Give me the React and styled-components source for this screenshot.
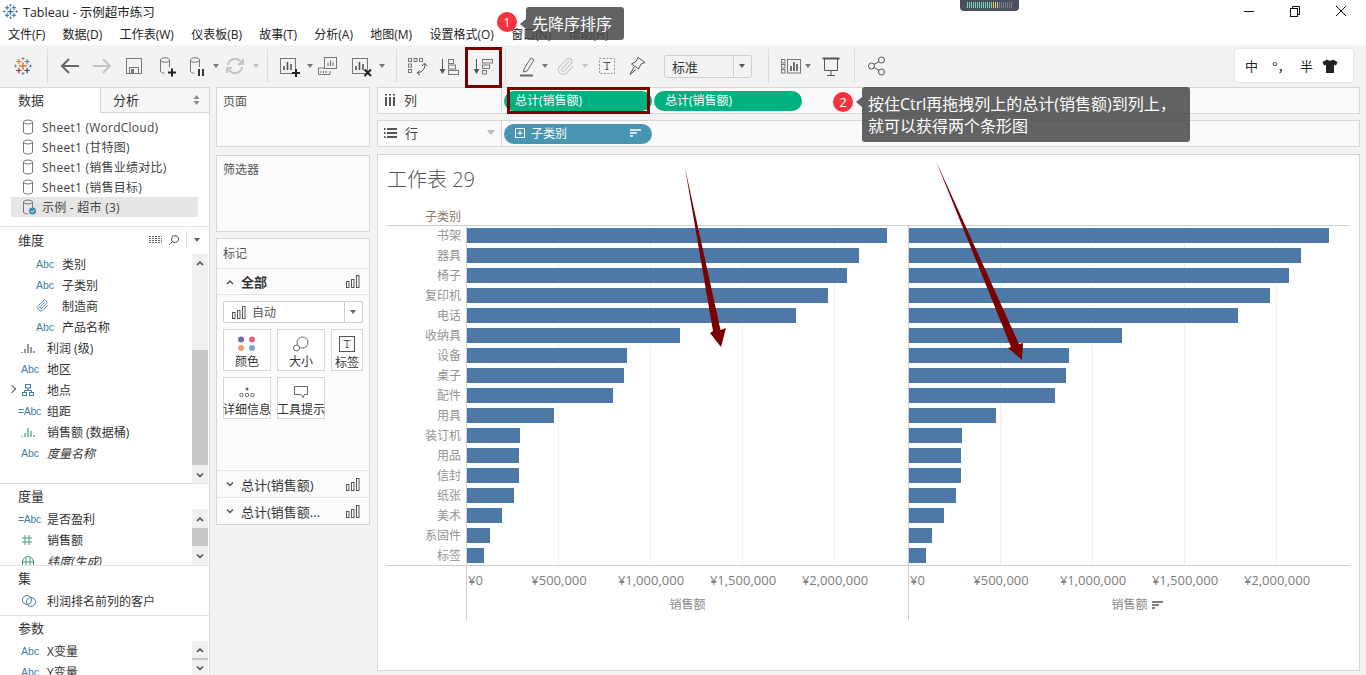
import styled, { createGlobalStyle } from 'styled-components';
import { Paperclip } from 'lucide-react';

const GlobalStyle = createGlobalStyle`
	html, body {
		margin: 0;
		padding: 0;
		overflow: hidden;
		background: #fff;
	}
	* {
		box-sizing: border-box;
	}
	body {
		font-family: "Open Sans", "Noto Sans CJK SC", sans-serif;
		font-size: 12px;
		color: #333;
	}
`;

const Page = styled.div`
	position: relative;
	width: 1366px;
	height: 675px;
	overflow: hidden;
	display: flex;
	flex-direction: column;
	background: #f3f3f3;
`;

const TitleBar = styled.div`
	height: 23px;
	background: #fff;
	display: flex;
	align-items: center;
	padding-left: 3px;
	padding-bottom: 1px;
	gap: 5px;
	font-size: 12.5px;
	color: #222;
`;

const WindowControls = styled.div`
	margin-left: auto;
	display: flex;
	align-items: center;
	padding-right: 19px;
	gap: 34px;
`;

const MenuBar = styled.div`
	height: 22px;
	background: #fff;
	display: flex;
	align-items: center;
	padding-left: 8px;
	gap: 17.3px;
	color: #222;
`;

const Toolbar = styled.div`
	height: 42px;
	display: flex;
	align-items: center;
	padding-left: 11px;
`;

const ToolSep = styled.div`
	width: 1px;
	height: 34px;
	background: #dcdcdc;
	margin-left: ${(p) => p.$ml}px;
`;

const Tool = styled.div`
	width: 24px;
	height: 24px;
	flex: none;
	margin-left: ${(p) => p.$ml || 0}px;
	display: flex;
	align-items: center;
	justify-content: center;
`;

const Caret = styled.div`
	width: 0;
	height: 0;
	flex: none;
	margin-left: ${(p) => p.$ml + 1}px;
	margin-right: 1px;
	border-left: 3px solid transparent;
	border-right: 3px solid transparent;
	border-top: 4px solid ${(p) => p.$color || '#777'};
`;

const ViewSelect = styled.div`
	width: 88px;
	height: 23px;
	margin-left: ${(p) => p.$ml}px;
	border: 1px solid #cfcfcf;
	border-radius: 2px;
	display: flex;
	align-items: center;
	padding-left: 7px;
	font-size: 13px;
`;

const SelectArrow = styled.div`
	margin-left: auto;
	width: 18px;
	height: 100%;
	border-left: 1px solid #cfcfcf;
	display: flex;
	align-items: center;
	justify-content: center;
`;

const Main = styled.div`
	flex: 1;
	display: flex;
	min-height: 0;
`;

const DataPanel = styled.div`
	width: 210px;
	flex: none;
	background: #fff;
	border-right: 1px solid #d6d6d6;
	border-top: 1px solid #d6d6d6;
	display: flex;
	flex-direction: column;
`;

const Tabs = styled.div`
	height: 25px;
	display: flex;
`;

const Tab = styled.div`
	width: ${(p) => (p.$active ? '100px' : '109px')};
	padding-left: ${(p) => (p.$active ? '18px' : '12px')};
	font-size: 13px;
	line-height: 25px;
	display: flex;
	justify-content: space-between;
	background: ${(p) => (p.$active ? '#fff' : '#f6f6f6')};
	${(p) => !p.$active && 'border-left: 1px solid #d6d6d6; border-bottom: 1px solid #d6d6d6;'}
`;

const SortArrows = styled.div`
	width: 26px;
	display: flex;
	align-items: center;
	justify-content: center;
`;

const SourceList = styled.div`
	height: 114px;
	padding-top: 4px;
	border-bottom: 1px solid #e2e2e2;
`;

const SourceRow = styled.div`
	height: 20px;
	margin-left: 11px;
	width: 187px;
	padding-left: 11px;
	display: flex;
	align-items: center;
	gap: 6px;
	letter-spacing: 0.25px;
	white-space: nowrap;
	color: #444;
	background: ${(p) => (p.$selected ? '#e6e6e6' : 'transparent')};
`;

const FieldSection = styled.div`
	height: ${(p) => p.$h}px;
	flex: none;
	display: flex;
	flex-direction: column;
	overflow: hidden;
	border-bottom: ${(p) => (p.$last ? 'none' : '1px solid #e2e2e2')};
`;

const SectionHead = styled.div`
	height: ${(p) => p.$h}px;
	flex: none;
	display: flex;
	align-items: center;
	padding-left: 18px;
	padding-bottom: 2px;
	font-size: 13px;
	color: #333;
`;

const HeadTools = styled.div`
	margin-left: auto;
	display: flex;
	align-items: center;
	padding-right: 8px;
	gap: 6px;
`;

const HeadDivider = styled.div`
	width: 1px;
	height: 18px;
	background: #ddd;
`;

const FieldBody = styled.div`
	flex: 1;
	min-height: 0;
	display: flex;
`;

const FieldList = styled.div`
	flex: 1;
	overflow: hidden;
	margin-top: -1px;
`;

const FieldRow = styled.div`
	position: relative;
	height: 21px;
	display: flex;
	align-items: center;
	padding-left: ${(p) => (p.$indent ? 36 : 21)}px;
	font-size: 12px;
	font-style: ${(p) => (p.$italic ? 'italic' : 'normal')};
	color: #333;
	white-space: nowrap;
`;

const FieldIcon = styled.div`
	width: ${(p) => (p.$wide ? 29 : 26)}px;
	flex: none;
	font-family: "Liberation Sans", sans-serif;
	font-size: 10.5px;
	font-style: normal;
	color: ${(p) => p.$color || '#3f7f9f'};
	white-space: nowrap;
	display: flex;
	align-items: center;
	margin-left: ${(p) => (p.$wide ? '-3px' : 0)};
	letter-spacing: ${(p) => (p.$wide ? '-0.3px' : 0)};
`;

const Expander = styled.div`
	position: absolute;
	left: 9px;
	top: 7px;
	width: 6px;
	height: 6px;
	border-top: 1px solid #555;
	border-right: 1px solid #555;
	transform: rotate(45deg);
`;

const ScrollTrack = styled.div`
	width: 16px;
	flex: none;
	margin-right: 1px;
	background: #f0f0f0;
	display: flex;
	flex-direction: column;
`;

const ScrollArrow = styled.div`
	height: ${(p) => p.$h}px;
	flex: none;
	display: flex;
	align-items: center;
	justify-content: center;
`;

const ScrollGap = styled.div`
	flex: ${(p) => (p.$h ? 'none' : 1)};
	height: ${(p) => p.$h || 0}px;
`;

const ScrollThumb = styled.div`
	height: ${(p) => p.$h}px;
	flex: none;
	background: #c8c8c8;
`;

const CardColumn = styled.div`
	width: 154px;
	flex: none;
	margin-left: 6px;
	display: flex;
	flex-direction: column;
`;

const Card = styled.div`
	height: ${(p) => p.$h}px;
	margin-top: ${(p) => p.$mt || 0}px;
	background: #fbfbfb;
	border: 1px solid #d6d6d6;
	display: flex;
	flex-direction: column;
`;

const CardTitle = styled.div`
	height: 29px;
	flex: none;
	padding-left: 6px;
	line-height: ${(p) => p.$lh || 27}px;
	color: #555;
`;

const MarkRow = styled.div`
	height: ${(p) => p.$h}px;
	flex: none;
	border-top: 1px solid #e4e4e4;
	display: flex;
	align-items: center;
	padding: 0 9px 0 8px;
	gap: 6px;
	font-size: 13px;
	font-weight: ${(p) => (p.$bold ? 700 : 400)};
	white-space: nowrap;
	color: #333;
`;

const RowEnd = styled.div`
	margin-left: auto;
	display: flex;
`;

const MarkBody = styled.div`
	flex: 1;
	border-top: 1px solid #e4e4e4;
	padding: 6px 6px 0;
`;

const MarkType = styled.div`
	height: 22px;
	border: 1px solid #d0d0d0;
	border-radius: 2px;
	background: #fff;
	display: flex;
	align-items: center;
	padding-left: 8px;
	gap: 6px;
	color: #555;
`;

const MarkGrid = styled.div`
	margin-top: 6px;
	display: flex;
	flex-wrap: wrap;
	gap: 6px;
`;

const MarkButton = styled.div`
	width: ${(p) => p.$w}px;
	height: 42px;
	background: #fff;
	border: 1px solid #d8d8d8;
	display: flex;
	flex-direction: column;
	align-items: center;
	padding-top: 3px;
	font-size: 12px;
	line-height: 16px;
	white-space: nowrap;
	color: #333;
`;

const ButtonIcon = styled.div`
	height: 22px;
	display: flex;
	align-items: center;
	justify-content: center;
`;

const RightColumn = styled.div`
	width: 983px;
	flex: none;
	margin-left: 7px;
	display: flex;
	flex-direction: column;
`;

const Shelf = styled.div`
	height: ${(p) => p.$h}px;
	margin-top: ${(p) => p.$mt || 0}px;
	background: #fafafa;
	border: 1px solid #d6d6d6;
	display: flex;
	align-items: center;
`;

const ShelfLabel = styled.div`
	width: 124px;
	height: 100%;
	flex: none;
	border-right: 1px solid #d6d6d6;
	display: flex;
	align-items: center;
	padding-left: 6px;
	padding-bottom: 2px;
	gap: 8px;
	font-size: 13px;
	color: #444;
`;

const ShelfCaret = styled.div`
	margin-left: auto;
	margin-right: 6px;
	width: 0;
	height: 0;
	border-left: 4px solid transparent;
	border-right: 4px solid transparent;
	border-top: 5px solid #bbb;
`;

const PillRow = styled.div`
	display: flex;
	padding-left: 2px;
	gap: 2px;
`;

const Pill = styled.div`
	width: 148px;
	height: 20px;
	border-radius: 10px;
	background: ${(p) => p.$color};
	color: #fff;
	display: flex;
	align-items: center;
	padding-left: 11px;
	padding-bottom: 2px;
	gap: 6px;
	font-size: 12px;
`;

const PillEnd = styled.div`
	margin-left: auto;
	margin-right: 11px;
	display: flex;
`;

const Viz = styled.div`
	height: 517px;
	margin-top: 7px;
	background: #fff;
	border: 1px solid #d6d6d6;
	padding-left: 8px;
`;

const VizTitle = styled.div`
	height: 50px;
	padding-left: 1px;
	font-size: 20px;
	font-weight: 300;
	line-height: 50px;
	color: #555;
`;

const Chart = styled.div`
	display: grid;
	grid-template-columns: 80px 442px 442px;
	grid-template-rows: 21px 340px 54px;
	color: #8a8a8a;
`;

const HeaderCell = styled.div`
	grid-column: 1 / 4;
	border-bottom: 1px solid #cfcfcf;
	color: #8a7a68;
`;

const HeaderText = styled.div`
	width: 80px;
	height: 20px;
	padding-right: 5px;
	text-align: right;
	line-height: 23px;
`;

const Labels = styled.div`
	border-bottom: 1px solid #cfcfcf;
`;

const Label = styled.div`
	height: 20px;
	padding-right: 5px;
	text-align: right;
	line-height: 20px;
	color: #939393;
`;

const Pane = styled.div`
	border-left: 1px solid #cfcfcf;
	border-bottom: 1px solid #cfcfcf;
	overflow: hidden;
	background: repeating-linear-gradient(90deg, transparent 0 91px, #f0f0f0 91px 92px);
`;

const BarRow = styled.div`
	height: 20px;
	padding-top: 2px;
`;

const Bar = styled.div`
	height: 15px;
	background: #4e79a7;
`;

const Axis = styled.div`
	border-left: 1px solid #cfcfcf;
`;

const Ticks = styled.div`
	display: flex;
	height: 27px;
	align-items: center;
	font-size: 13px;
	color: #7d7d7d;
	white-space: nowrap;
`;

const Tick = styled.div`
	flex: none;
	width: ${(p) => (p.$first ? '46px' : '92px')};
	padding-left: ${(p) => (p.$first ? '1px' : 0)};
	text-align: ${(p) => (p.$first ? 'left' : 'center')};
`;

const AxisTitle = styled.div`
	display: flex;
	justify-content: center;
	line-height: 20px;
	padding-top: 2px;
	color: #8a8a8a;
`;

const AxisTitleText = styled.span`
	position: relative;
`;

const AxisSort = styled.span`
	position: absolute;
	left: 41px;
	top: 6px;
	display: flex;
`;

const TopGadget = styled.div`
	position: absolute;
	left: 960px;
	top: 0;
	width: 59px;
	height: 11px;
	background: #4a4e5d;
	border-radius: 0 0 4px 4px;
	display: flex;
	align-items: center;
	justify-content: center;
`;

const GadgetMeter = styled.div`
	width: 46px;
	height: 6px;
	margin-top: -2px;
	background: repeating-linear-gradient(90deg, transparent 0 1px, #4a4e5d 1px 2px),
		linear-gradient(90deg, #6fd6b8 0 55%, #e8cf6a 55% 68%, #7b7f8c 68% 100%);
`;

const ImeWidget = styled.div`
	position: absolute;
	left: 1235px;
	top: 49px;
	width: 118px;
	height: 33px;
	background: #fff;
	border-radius: 3px;
	box-shadow: 0 0 3px rgba(0, 0, 0, 0.12);
	display: flex;
	align-items: center;
	padding-left: 10px;
	font-size: 13px;
	color: #222;
`;

const ImeItem = styled.span`
	width: ${(p) => p.$w}px;
	flex: none;
	display: flex;
`;

const Note = styled.div`
	position: absolute;
	left: ${(p) => p.$x}px;
	top: ${(p) => p.$y}px;
	width: ${(p) => p.$w}px;
	height: ${(p) => p.$h}px;
	background: rgba(70, 70, 70, 0.85);
	border-radius: 3px;
	color: #fff;
	font-size: 16px;
	line-height: 22px;
	padding: ${(p) => p.$pad};
	white-space: nowrap;

	&::before {
		content: '';
		position: absolute;
		left: -6px;
		top: ${(p) => p.$notch}px;
		border-top: 5px solid transparent;
		border-bottom: 5px solid transparent;
		border-right: 6px solid rgba(70, 70, 70, 0.85);
	}
`;

const Badge = styled.div`
	position: absolute;
	left: ${(p) => p.$x - 10}px;
	top: ${(p) => p.$y - 10}px;
	width: 20px;
	height: 20px;
	border-radius: 50%;
	background: #f5333f;
	color: #fff;
	font-size: 13px;
	line-height: 20px;
	text-align: center;
`;

const RedBox = styled.div`
	position: absolute;
	left: ${(p) => p.$x}px;
	top: ${(p) => p.$y}px;
	width: ${(p) => p.$w}px;
	height: ${(p) => p.$h}px;
	border: 3px solid #7b0000;
`;

const ArrowLayer = styled.svg`
	position: absolute;
	left: 0;
	top: 0;
	pointer-events: none;
`;

const Line = ({ children, size = 24, stroke = '#777', width = 1 }) => (
	<svg width={size} height={size} viewBox={`0 0 ${size} ${size}`} fill="none" stroke={stroke} strokeWidth={width}>
		{children}
	</svg>
);

const TableauLogo = ({ size = 24, colors = ['#e8762d', '#5b879b', '#c72037', '#1f447e', '#5b879b'] }) => {
	const cross = (x, y, r, c, w) => (
		<g key={`${x}-${y}`} stroke={c} strokeWidth={w}>
			<path d={`M${x - r} ${y}H${x + r}M${x} ${y - r}V${y + r}`} />
		</g>
	);
	return (
		<svg width={size} height={size} viewBox="0 0 24 24" fill="none">
			{cross(12, 12, 5, colors[0], 2)}
			{cross(6.5, 6, 3.5, colors[0], 1.6)}
			{cross(17.5, 6, 3.5, colors[1], 1.6)}
			{cross(6.5, 18, 3.5, colors[2], 1.6)}
			{cross(17.5, 18, 3.5, colors[3], 1.6)}
			{cross(2, 12, 2, colors[4], 1.2)}
			{cross(22, 12, 2, colors[4], 1.2)}
			{cross(12, 2, 2, colors[4], 1.2)}
			{cross(12, 22, 2, colors[4], 1.2)}
		</svg>
	);
};

const BackIcon = ({ color = '#666', flip }) => (
	<Line stroke={color} width={2}>
		<path d={flip ? 'M3 12H20M13 5l7 7-7 7' : 'M21 12H4M11 5l-7 7 7 7'} />
	</Line>
);

const SaveIcon = () => (
	<Line>
		<rect x="4.5" y="4.5" width="15" height="15" />
		<rect x="7.5" y="13.5" width="9" height="6" />
		<rect x="9" y="15" width="3" height="4" fill="#777" stroke="none" />
	</Line>
);

const DbShape = () => (
	<>
		<path d="M6.5 6V17c0 1.5 2 2.2 4 2.2M15.5 6v7" />
		<ellipse cx="11" cy="6" rx="4.5" ry="2.2" />
	</>
);

const DbAddIcon = () => (
	<Line>
		<DbShape />
		<path d="M18 14.5v8M14 18.5h8" stroke="#222" strokeWidth="2" />
	</Line>
);

const DbPauseIcon = () => (
	<Line>
		<DbShape />
		<path d="M15 15v7M19 15v7" stroke="#333" strokeWidth="2" />
	</Line>
);

const RefreshIcon = () => (
	<Line stroke="#c4c4c4" width={2}>
		<path d="M5 11a7 7 0 0 1 12-4l2 2M19 13a7 7 0 0 1-12 4l-2-2" />
		<path d="M20 5v5h-5M4 19v-5h5" />
	</Line>
);

const NewSheetIcon = () => (
	<Line>
		<rect x="2.5" y="4.5" width="15" height="15" />
		<path d="M6 16v-4M9.5 16V8M13 16v-6" stroke="#555" strokeWidth="1.6" />
		<path d="M18 15v8M14 19h8" stroke="#222" strokeWidth="2" />
	</Line>
);

const DuplicateIcon = () => (
	<Line>
		<path d="M9 14H3.5v6.5H15V17" />
		<rect x="9.5" y="3.5" width="12" height="11" />
		<path d="M13 12V9M15.5 12V6.5M18 12V8M6 19v-2M8.5 19v-2M11 19v-2" stroke="#666" />
	</Line>
);

const ClearIcon = () => (
	<Line>
		<rect x="2.5" y="4.5" width="15" height="15" />
		<path d="M6 16v-4M9.5 16V8M13 16v-6" stroke="#555" strokeWidth="1.6" />
		<path d="M14.5 15.5l6.5 6.5M21 15.5L14.5 22" stroke="#222" strokeWidth="2" />
	</Line>
);

const SwapIcon = () => (
	<Line>
		<rect x="3.5" y="4.5" width="3" height="3" />
		<rect x="9" y="4.5" width="3" height="3" />
		<rect x="14.5" y="4.5" width="3" height="3" />
		<rect x="3.5" y="10" width="3" height="3" />
		<rect x="3.5" y="15.5" width="3" height="3" />
		<path d="M19.5 10c1 4-2 8.5-7 9" stroke="#555" />
		<path d="M17 12l2.5-3 2.5 3M15 16.5L12 19l3 2" stroke="#555" />
	</Line>
);

const SortAscIcon = () => (
	<Line>
		<path d="M5.5 5v14" stroke="#555" />
		<path d="M2.5 15h6l-3 5z" fill="#555" stroke="none" />
		<rect x="11.5" y="5.5" width="5" height="4" />
		<rect x="11.5" y="11" width="7" height="4" />
		<rect x="11.5" y="16.5" width="10" height="4" />
	</Line>
);

const SortDescIcon = () => (
	<Line>
		<path d="M6.5 5v14" stroke="#555" />
		<path d="M3.5 15h6l-3 5z" fill="#555" stroke="none" />
		<rect x="12.5" y="5.5" width="10" height="3.5" />
		<rect x="12.5" y="11" width="7" height="3.5" />
		<rect x="12.5" y="16.5" width="4" height="3.5" />
	</Line>
);

const HighlightIcon = () => (
	<Line>
		<path d="M9 15l7-11 3 2-7 11-3.5 1z" stroke="#666" />
		<path d="M5 21.5h13" stroke="#666" strokeWidth="2" />
	</Line>
);

const TextBoxIcon = ({ dashed = true }) => (
	<Line>
		<rect x="4.5" y="4.5" width="15" height="15" strokeDasharray={dashed ? '2 1.5' : undefined} stroke={dashed ? '#999' : '#555'} />
		<path d="M8.5 8.5h7M12 8.5v7M10.5 15.5h3" stroke="#555" />
	</Line>
);

const PinIcon = () => (
	<Line stroke="#555">
		<path d="M13 3.5l7 5-4 1.5-2.5 5-7-5 4.5-2.5zM9 13l-4 7.5 6-5" />
	</Line>
);

const ShowMeIcon = () => (
	<Line>
		<rect x="2.5" y="5.5" width="3.5" height="3.5" />
		<rect x="2.5" y="10.5" width="3.5" height="3.5" />
		<rect x="2.5" y="15.5" width="3.5" height="3.5" />
		<rect x="8.5" y="5.5" width="13" height="13.5" />
		<path d="M12 17v-5M15 17V8M18 17v-7" stroke="#555" strokeWidth="1.6" />
	</Line>
);

const PresentIcon = () => (
	<Line stroke="#555">
		<path d="M5.5 5v11.5h13V5M12 16.5V21M8 21.5h8" />
		<path d="M3.5 4.5h17" strokeWidth="2" />
	</Line>
);

const ShareIcon = () => (
	<Line stroke="#555">
		<circle cx="6.5" cy="12" r="3" />
		<circle cx="16.5" cy="6" r="3" />
		<circle cx="16.5" cy="18" r="3" />
		<path d="M9 10.5l5-3M9 13.5l5 3" />
	</Line>
);

const DbSmallIcon = ({ checked }) => (
	<svg width="14" height="16" viewBox="0 0 14 16" fill="none" stroke="#777">
		<path d="M1.5 3v10c0 1.2 2 2 4.5 2" />
		<path d="M10.5 3v6" />
		{!checked && <path d="M10.5 9v4c0 1.2-2 2-4.5 2" />}
		<ellipse cx="6" cy="3" rx="4.5" ry="2" />
		{checked && (
			<>
				<circle cx="10.5" cy="12" r="3.5" fill="#3a87ad" stroke="none" />
				<path d="M8.8 12l1.3 1.3 2.2-2.3" stroke="#fff" />
			</>
		)}
	</svg>
);

const SmallBars = ({ color = '#555' }) => (
	<svg width="16" height="12" viewBox="0 0 16 12" fill="none" stroke={color} strokeWidth="1.2">
		<path d="M1 11v-1M4 11V7M7 11V2M10 11V5M13 11V9" />
	</svg>
);

const HierarchyIcon = () => (
	<svg width="14" height="14" viewBox="0 0 14 14" fill="none" stroke="#3f7f9f">
		<rect x="4.5" y="1.5" width="5" height="3.5" />
		<rect x="1.5" y="9.5" width="4" height="3" />
		<rect x="8.5" y="9.5" width="4" height="3" />
		<path d="M7 5v2.5M3.5 9.5v-2h7v2" />
	</svg>
);

const HashIcon = () => (
	<svg width="12" height="12" viewBox="0 0 12 12" fill="none" stroke="#3f9a7e">
		<path d="M4 1v10M8 1v10M1 4h10M1 8h10" />
	</svg>
);

const GlobeIcon = () => (
	<svg width="14" height="12" viewBox="0 0 14 12" fill="none" stroke="#3f9a7e">
		<path d="M1.5 11.5V7a5.5 5.5 0 0 1 11 0v4.5zM1.5 7h11M5 2.5v9M9 2.5v9" />
	</svg>
);

const VennIcon = () => (
	<svg width="16" height="14" viewBox="0 0 16 14" fill="none" stroke="#3f7f9f">
		<circle cx="6" cy="6" r="4.5" />
		<circle cx="10" cy="8" r="4.5" />
	</svg>
);

const SearchSmall = () => (
	<svg width="12" height="12" viewBox="0 0 12 12" fill="none" stroke="#555">
		<circle cx="7" cy="5" r="3.5" />
		<path d="M4.5 7.5L1.5 10.5" />
	</svg>
);

const GridSmall = () => (
	<svg width="13" height="10" viewBox="0 0 13 10" stroke="#666" strokeDasharray="2 1">
		<path d="M0 1.5h13M0 3.5h13M0 5.5h13M0 7.5h13" />
	</svg>
);

const UpDown = () => (
	<svg width="7" height="12" viewBox="0 0 7 12" fill="#888">
		<path d="M3.5 1L6.5 5h-6zM3.5 11L.5 7h6z" />
	</svg>
);

const Chevron = ({ up, color = '#444', size = 10 }) => (
	<svg width={size} height={size} viewBox="0 0 10 10" fill="none" stroke={color} strokeWidth="1.5">
		<path d={up ? 'M2 7l3-3 3 3' : 'M2 3.5l3 3 3-3'} />
	</svg>
);

const MarkBarsIcon = () => (
	<svg width="14" height="13" viewBox="0 0 14 13" fill="none" stroke="#555">
		<rect x="0.5" y="6.5" width="2.5" height="6" />
		<rect x="5.5" y="4.5" width="2.5" height="8" />
		<rect x="10.5" y="0.5" width="2.5" height="12" />
	</svg>
);

const ColorDots = () => (
	<svg width="20" height="16" viewBox="0 0 20 16">
		<circle cx="4" cy="3.5" r="3" fill="#7d6a9b" />
		<circle cx="15" cy="3.5" r="3" fill="#e8607a" />
		<circle cx="4" cy="12" r="3" fill="#eea070" />
		<circle cx="15" cy="12" r="3" fill="#7da6cf" />
	</svg>
);

const SizeIcon = () => (
	<svg width="16" height="16" viewBox="0 0 16 16" fill="none" stroke="#666">
		<circle cx="9.5" cy="6.5" r="5.5" />
		<circle cx="3.5" cy="12" r="3" fill="#fff" />
	</svg>
);

const DetailIcon = () => (
	<svg width="16" height="12" viewBox="0 0 16 12" fill="none" stroke="#666">
		<circle cx="8" cy="3" r="1.5" fill="#666" stroke="none" />
		<circle cx="2.5" cy="9" r="1.7" />
		<circle cx="8" cy="9" r="1.7" />
		<circle cx="13.5" cy="9" r="1.7" />
	</svg>
);

const TooltipIcon = () => (
	<svg width="16" height="14" viewBox="0 0 16 14" fill="none" stroke="#666">
		<path d="M1.5 1.5h13v8h-3l-1.5 3-2-3H1.5z" />
	</svg>
);

const ColumnsIcon = () => (
	<svg width="12" height="12" viewBox="0 0 12 12" stroke="#555" strokeWidth="2">
		<path d="M2 3v9M6 3v9M10 3v9" />
		<path d="M2 0v1.5M6 0v1.5M10 0v1.5" />
	</svg>
);

const RowsIcon = () => (
	<svg width="13" height="12" viewBox="0 0 13 12" stroke="#555" strokeWidth="2">
		<path d="M3 2h10M3 6h10M3 10h10M0 2h1.5M0 6h1.5M0 10h1.5" />
	</svg>
);

const PlusBox = () => (
	<svg width="10" height="10" viewBox="0 0 10 10" fill="none" stroke="#fff">
		<rect x="0.5" y="0.5" width="9" height="9" />
		<path d="M5 2.5v5M2.5 5h5" />
	</svg>
);

const SortBars = ({ color = '#fff' }) => (
	<svg width="11" height="8" viewBox="0 0 11 8" stroke={color} strokeWidth="1.5">
		<path d="M0 1h11M0 4h7M0 7h3" />
	</svg>
);

const ShirtIcon = () => (
	<svg width="16" height="14" viewBox="0 0 16 14" fill="#222">
		<path d="M5 .5L.5 3 2 6.5l2-.8V14h8V5.7l2 .8L15.5 3 11 .5C10 2 6 2 5 .5z" />
	</svg>
);

const bars = [
	['书架', 420],
	['器具', 392],
	['椅子', 380],
	['复印机', 361],
	['电话', 329],
	['收纳具', 213],
	['设备', 160],
	['桌子', 157],
	['配件', 146],
	['用具', 87],
	['装订机', 53],
	['用品', 52],
	['信封', 52],
	['纸张', 47],
	['美术', 35],
	['系固件', 23],
	['标签', 17],
];

const ticks = ['¥500,000', '¥1,000,000', '¥1,500,000', '¥2,000,000'];
const menus = ['文件(F)', '数据(D)', '工作表(W)', '仪表板(B)', '故事(T)', '分析(A)', '地图(M)', '设置格式(O)', '窗口(N)', '帮助(H)'];
const sources = ['Sheet1 (WordCloud)', 'Sheet1 (甘特图)', 'Sheet1 (销售业绩对比)', 'Sheet1 (销售目标)'];

const BarPane = () => (
	<Pane>
		{bars.map(([name, width]) => (
			<BarRow key={name}>
				<Bar style={{ width }} />
			</BarRow>
		))}
	</Pane>
);

const AxisPart = ({ sorted }) => (
	<Axis>
		<Ticks>
			<Tick $first>¥0</Tick>
			{ticks.map((tick) => (
				<Tick key={tick}>{tick}</Tick>
			))}
		</Ticks>
		<AxisTitle>
			<AxisTitleText>
				销售额
				{sorted && (
					<AxisSort>
						<SortBars color="#555" />
					</AxisSort>
				)}
			</AxisTitleText>
		</AxisTitle>
	</Axis>
);

const Scrollbar = ({ top, thumb, upH, downH }) => (
	<ScrollTrack>
		<ScrollArrow $h={upH}>
			<Chevron up />
		</ScrollArrow>
		{top ? <ScrollGap $h={top} /> : null}
		<ScrollThumb $h={thumb} />
		<ScrollGap />
		<ScrollArrow $h={downH}>
			<Chevron />
		</ScrollArrow>
	</ScrollTrack>
);

export default function App() {
	return (
		<Page>
			<GlobalStyle />
			<TitleBar>
				<TableauLogo size={15} colors={['#2f6f9f', '#2f6f9f', '#2f6f9f', '#2f6f9f', '#2f6f9f']} />
				Tableau - 示例超市练习
				<WindowControls>
					<Line size={12} stroke="#111">
						<path d="M1 6.5h10" />
					</Line>
					<Line size={12} stroke="#111">
						<rect x="1.5" y="3.5" width="7" height="8" />
						<path d="M3.5 3.5v-2h7v8h-2" />
					</Line>
					<Line size={12} stroke="#111">
						<path d="M1 1l10 10M11 1L1 11" />
					</Line>
				</WindowControls>
			</TitleBar>
			<MenuBar>
				{menus.map((menu) => (
					<div key={menu}>{menu}</div>
				))}
			</MenuBar>
			<Toolbar>
				<Tool><TableauLogo size={18} /></Tool>
				<ToolSep $ml={12} />
				<Tool $ml={10}><BackIcon /></Tool>
				<Tool $ml={8}><BackIcon color="#c4c4c4" flip /></Tool>
				<Tool $ml={8}><SaveIcon /></Tool>
				<Tool $ml={8}><DbAddIcon /></Tool>
				<Tool $ml={6}><DbPauseIcon /></Tool>
				<Caret $ml={4} />
				<Tool $ml={3}><RefreshIcon /></Tool>
				<Caret $ml={5} $color="#c4c4c4" />
				<ToolSep $ml={7} />
				<Tool $ml={10}><NewSheetIcon /></Tool>
				<Caret $ml={4} />
				<Tool $ml={1}><DuplicateIcon /></Tool>
				<Tool $ml={11}><ClearIcon /></Tool>
				<Caret $ml={4} />
				<ToolSep $ml={10} />
				<Tool $ml={8}><SwapIcon /></Tool>
				<Tool $ml={8}><SortAscIcon /></Tool>
				<Tool $ml={9}><SortDescIcon /></Tool>
				<ToolSep $ml={11} />
				<Tool $ml={9}><HighlightIcon /></Tool>
				<Caret $ml={2} />
				<Tool $ml={4}><Paperclip size={19} color="#c8c8c8" strokeWidth={1.4} /></Tool>
				<Caret $ml={4} $color="#c4c4c4" />
				<Tool $ml={6}><TextBoxIcon /></Tool>
				<Tool $ml={6}><PinIcon /></Tool>
				<ViewSelect $ml={15}>
					标准
					<SelectArrow><Caret $ml={-1} $color="#555" /></SelectArrow>
				</ViewSelect>
				<ToolSep $ml={16} />
				<Tool $ml={10}><ShowMeIcon /></Tool>
				<Caret $ml={1} />
				<Tool $ml={7}><PresentIcon /></Tool>
				<ToolSep $ml={11} />
				<Tool $ml={10}><ShareIcon /></Tool>
			</Toolbar>
			<Main>
				<DataPanel>
					<Tabs>
						<Tab $active>数据</Tab>
						<Tab>
							分析
							<SortArrows><UpDown /></SortArrows>
						</Tab>
					</Tabs>
					<SourceList>
						{sources.map((source) => (
							<SourceRow key={source}>
								<DbSmallIcon />
								{source}
							</SourceRow>
						))}
						<SourceRow $selected>
							<DbSmallIcon checked />
							示例 - 超市 (3)
						</SourceRow>
					</SourceList>
					<FieldSection $h={257}>
						<SectionHead $h={27}>
							维度
							<HeadTools>
								<GridSmall />
								<SearchSmall />
								<HeadDivider />
								<Caret $ml={0} $color="#666" />
							</HeadTools>
						</SectionHead>
						<FieldBody>
							<FieldList>
								<FieldRow $indent><FieldIcon>Abc</FieldIcon>类别</FieldRow>
								<FieldRow $indent><FieldIcon>Abc</FieldIcon>子类别</FieldRow>
								<FieldRow $indent><FieldIcon><Paperclip size={13} color="#3f7f9f" strokeWidth={1.5} /></FieldIcon>制造商</FieldRow>
								<FieldRow $indent><FieldIcon>Abc</FieldIcon>产品名称</FieldRow>
								<FieldRow><FieldIcon><SmallBars /></FieldIcon>利润 (级)</FieldRow>
								<FieldRow><FieldIcon>Abc</FieldIcon>地区</FieldRow>
								<FieldRow><Expander /><FieldIcon><HierarchyIcon /></FieldIcon>地点</FieldRow>
								<FieldRow><FieldIcon $wide>=Abc</FieldIcon>组距</FieldRow>
								<FieldRow><FieldIcon><SmallBars color="#3f9a7e" /></FieldIcon>销售额 (数据桶)</FieldRow>
								<FieldRow $italic><FieldIcon>Abc</FieldIcon>度量名称</FieldRow>
							</FieldList>
							<Scrollbar upH={18} top={78} thumb={115} downH={17} />
						</FieldBody>
					</FieldSection>
					<FieldSection $h={82}>
						<SectionHead $h={25}>度量</SectionHead>
						<FieldBody>
							<FieldList>
								<FieldRow><FieldIcon $wide>=Abc</FieldIcon>是否盈利</FieldRow>
								<FieldRow><FieldIcon><HashIcon /></FieldIcon>销售额</FieldRow>
								<FieldRow $italic><FieldIcon><GlobeIcon /></FieldIcon>纬度(生成)</FieldRow>
							</FieldList>
							<Scrollbar upH={19} thumb={18} downH={19} />
						</FieldBody>
					</FieldSection>
					<FieldSection $h={50}>
						<SectionHead $h={24}>集</SectionHead>
						<FieldRow><FieldIcon><VennIcon /></FieldIcon>利润排名前列的客户</FieldRow>
					</FieldSection>
					<FieldSection $h={59} $last>
						<SectionHead $h={25}>参数</SectionHead>
						<FieldBody>
							<FieldList>
								<FieldRow><FieldIcon>Abc</FieldIcon>X变量</FieldRow>
								<FieldRow><FieldIcon>Abc</FieldIcon>Y变量</FieldRow>
							</FieldList>
							<Scrollbar upH={17} thumb={2} downH={15} />
						</FieldBody>
					</FieldSection>
				</DataPanel>
				<CardColumn>
					<Card $h={60}><CardTitle>页面</CardTitle></Card>
					<Card $h={77} $mt={8}><CardTitle>筛选器</CardTitle></Card>
					<Card $h={287} $mt={6}>
						<CardTitle $lh={29}>标记</CardTitle>
						<MarkRow $h={26} $bold>
							<Chevron up color="#555" />
							全部
							<RowEnd><MarkBarsIcon /></RowEnd>
						</MarkRow>
						<MarkBody>
							<MarkType>
								<MarkBarsIcon />
								自动
								<SelectArrow><Caret $ml={-1} $color="#666" /></SelectArrow>
							</MarkType>
							<MarkGrid>
								<MarkButton $w={48}><ButtonIcon><ColorDots /></ButtonIcon>颜色</MarkButton>
								<MarkButton $w={48}><ButtonIcon><SizeIcon /></ButtonIcon>大小</MarkButton>
								<MarkButton $w={32}><ButtonIcon><TextBoxIcon dashed={false} /></ButtonIcon>标签</MarkButton>
								<MarkButton $w={48}><ButtonIcon><DetailIcon /></ButtonIcon>详细信息</MarkButton>
								<MarkButton $w={48}><ButtonIcon><TooltipIcon /></ButtonIcon>工具提示</MarkButton>
							</MarkGrid>
						</MarkBody>
						<MarkRow $h={27}>
							<Chevron color="#555" />
							总计(销售额)
							<RowEnd><MarkBarsIcon /></RowEnd>
						</MarkRow>
						<MarkRow $h={27}>
							<Chevron color="#555" />
							总计(销售额...
							<RowEnd><MarkBarsIcon /></RowEnd>
						</MarkRow>
					</Card>
				</CardColumn>
				<RightColumn>
					<Shelf $h={27}>
						<ShelfLabel><ColumnsIcon />列</ShelfLabel>
						<PillRow>
							<Pill $color="#00b180">总计(销售额)</Pill>
							<Pill $color="#00b180">总计(销售额)</Pill>
						</PillRow>
					</Shelf>
					<Shelf $h={27} $mt={6}>
						<ShelfLabel><RowsIcon />行<ShelfCaret /></ShelfLabel>
						<PillRow>
							<Pill $color="#4996b2">
								<PlusBox />
								子类别
								<PillEnd><SortBars /></PillEnd>
							</Pill>
						</PillRow>
					</Shelf>
					<Viz>
						<VizTitle>工作表 29</VizTitle>
						<Chart>
							<HeaderCell><HeaderText>子类别</HeaderText></HeaderCell>
							<Labels>
								{bars.map(([name]) => (
									<Label key={name}>{name}</Label>
								))}
							</Labels>
							<BarPane />
							<BarPane />
							<div />
							<AxisPart />
							<AxisPart sorted />
						</Chart>
					</Viz>
				</RightColumn>
			</Main>

			<TopGadget><GadgetMeter /></TopGadget>
			<ImeWidget>
				<ImeItem $w={27}>中</ImeItem>
				<ImeItem $w={28}>°，</ImeItem>
				<ImeItem $w={22}>半</ImeItem>
				<ShirtIcon />
			</ImeWidget>
			<RedBox $x={465} $y={47} $w={37} $h={41} />
			<RedBox $x={507} $y={87} $w={143} $h={27} />
			<Badge $x={507} $y={22}>1</Badge>
			<Note $x={526} $y={7} $w={98} $h={33} $notch={12} $pad="6px 6px">先降序排序</Note>
			<Badge $x={843} $y={102}>2</Badge>
			<Note $x={862} $y={87} $w={328} $h={55} $notch={10} $pad="6px 6px">
				按住Ctrl再拖拽列上的总计(销售额)到列上，
				<br />
				就可以获得两个条形图
			</Note>
			<ArrowLayer width="1366" height="675" viewBox="0 0 1366 675">
				<polygon points="685,168 713,331 710,333 721,347 726,328 720.5,330" fill="#7b0000" />
				<polygon points="936,161 1011,347 1008,348 1022,360 1023,343 1019,344" fill="#7b0000" />
			</ArrowLayer>
		</Page>
	);
}
